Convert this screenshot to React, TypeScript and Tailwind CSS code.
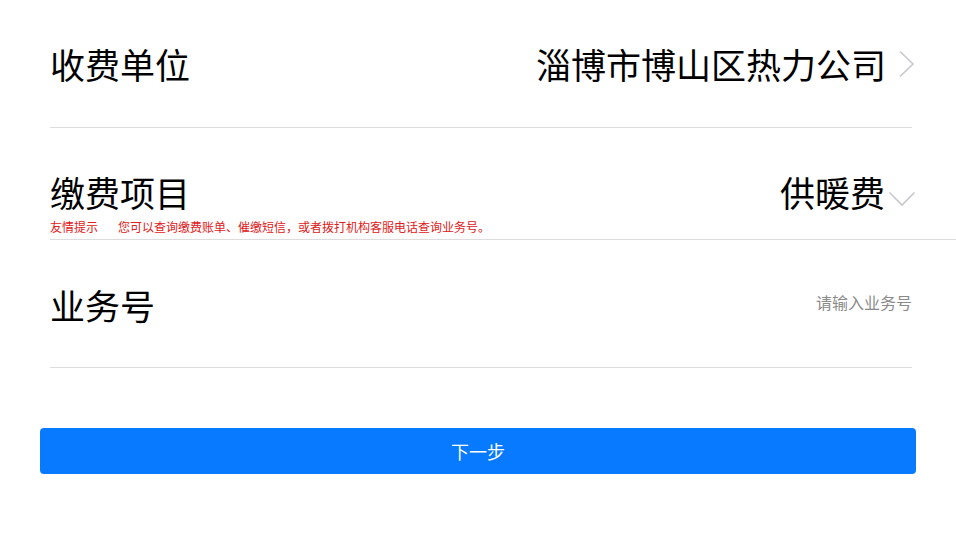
import React, { useState } from 'react'

const font = { fontFamily: '"Noto Sans CJK SC", "Noto Sans", sans-serif' }

const ChevronRight: React.FC = () => (
  <svg width="17" height="28" viewBox="0 0 17 28" className="ml-[12px] shrink-0">
    <polyline points="2,1.5 15,14 2,26.5" fill="none" stroke="#c8c8cc" strokeWidth="1.6" />
  </svg>
)

const ChevronDown: React.FC = () => (
  <svg width="28" height="16" viewBox="0 0 28 16" className="ml-[3px] mt-[14px] shrink-0">
    <polyline points="1.5,1.5 14,14 26.5,1.5" fill="none" stroke="#c8c8cc" strokeWidth="1.6" />
  </svg>
)

const App: React.FC = () => {
  const [bizNo, setBizNo] = useState('')
  return (
    <div className="w-[956px] h-[541px] bg-white text-black" style={font}>
      <div className="ml-[50px] mr-[44px] h-[128px] border-b border-[#dcdcdc] flex items-center justify-between">
        <span className="text-[35px] leading-[40px]">收费单位</span>
        <div className="flex items-center -mr-[3px]">
          <span className="text-[35px] leading-[40px]">淄博市博山区热力公司</span>
          <ChevronRight />
        </div>
      </div>

      <div className="ml-[50px] h-[112px] pt-[44px] border-b border-[#dcdcdc] flex flex-col">
        <div className="flex items-center justify-between pr-[40px]">
          <span className="text-[35px] leading-[40px]">缴费项目</span>
          <div className="flex items-center">
            <span className="text-[35px] leading-[40px]">供暖费</span>
            <ChevronDown />
          </div>
        </div>
        <div className="mt-[7px] flex text-[12px] leading-[16px] text-[#e02020]">
          <span>友情提示</span>
          <span className="ml-[20px]">您可以查询缴费账单、催缴短信，或者拨打机构客服电话查询业务号。</span>
        </div>
      </div>

      <div className="ml-[50px] mr-[44px] h-[128px] pt-[2px] border-b border-[#dcdcdc] flex items-center justify-between">
        <span className="text-[35px] leading-[40px]">业务号</span>
        <input
          value={bizNo}
          onChange={(e) => setBizNo(e.target.value)}
          placeholder="请输入业务号"
          className="w-[300px] -mt-[6px] text-right text-[16px] leading-[20px] outline-none bg-transparent placeholder:text-[#8a8a8a]"
          style={font}
        />
      </div>

      <div className="px-[40px] mt-[60px]">
        <button className="w-full h-[46px] rounded-[4px] bg-[#077aff] text-white text-[18px]" style={font}>
          下一步
        </button>
      </div>
    </div>
  )
}

export default App
